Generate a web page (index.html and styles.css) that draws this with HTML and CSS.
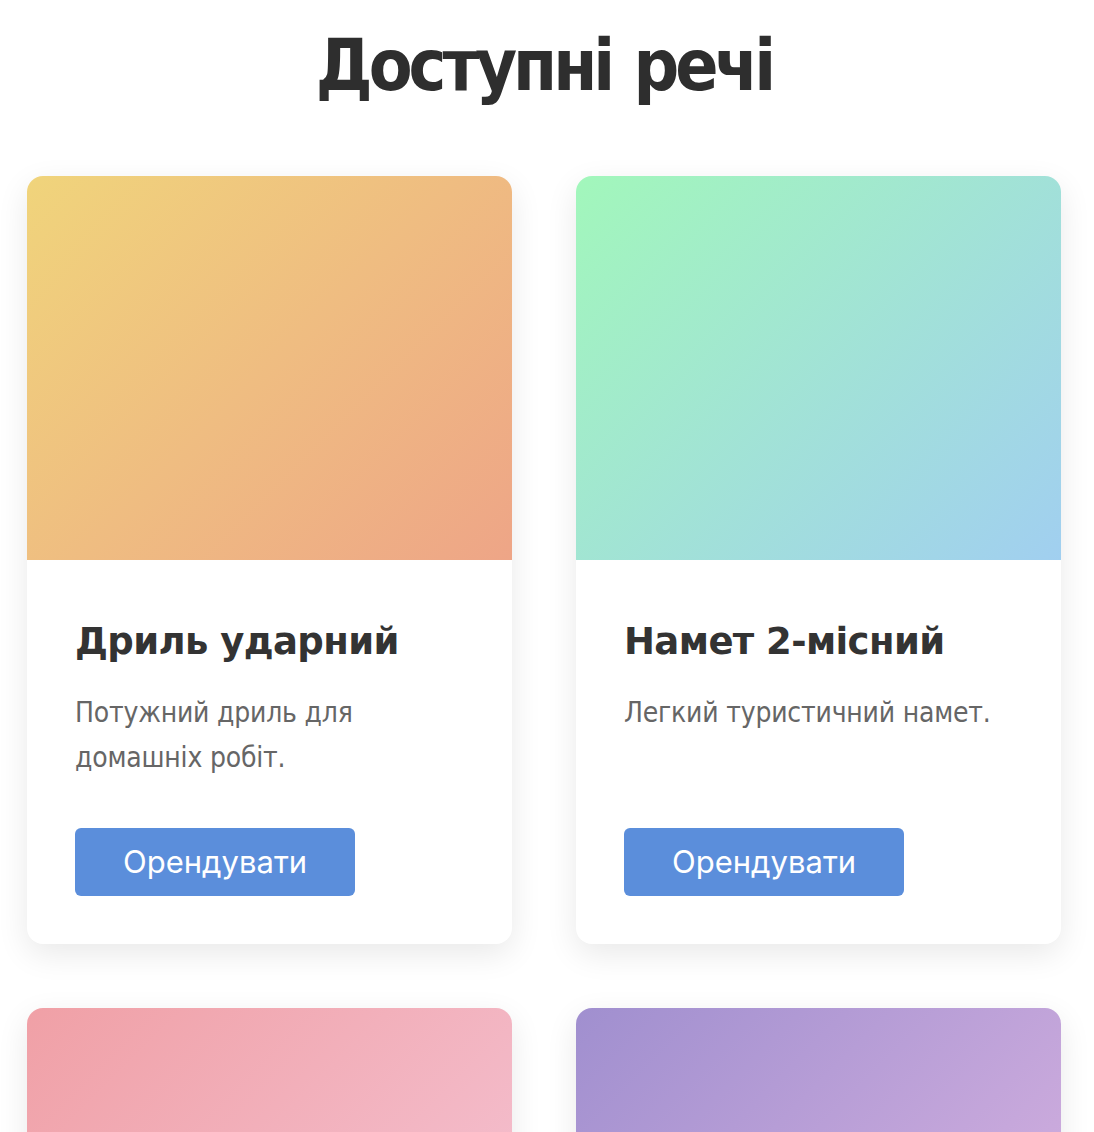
FILE: index.html
```html
<!DOCTYPE html>
<html lang="uk">
<head>
<meta charset="utf-8">
<title>Доступні речі</title>
<link rel="stylesheet" href="styles.css">
</head>
<body>
<main class="page">
  <h1 class="page-title">Доступні речі</h1>
  <div class="grid">
    <article class="card">
      <div class="card-image img-sunny"></div>
      <div class="card-body">
        <h3 class="card-title">Дриль ударний</h3>
        <p class="card-text">Потужний дриль для домашніх робіт.</p>
        <button class="btn">Орендувати</button>
      </div>
    </article>
    <article class="card">
      <div class="card-image img-mint"></div>
      <div class="card-body">
        <h3 class="card-title">Намет 2-місний</h3>
        <p class="card-text">Легкий туристичний намет.</p>
        <button class="btn">Орендувати</button>
      </div>
    </article>
    <article class="card">
      <div class="card-image img-pink"></div>
      <div class="card-body">
        <h3 class="card-title">Велосипед міський</h3>
        <p class="card-text">Зручний велосипед для прогулянок містом.</p>
        <button class="btn">Орендувати</button>
      </div>
    </article>
    <article class="card">
      <div class="card-image img-lilac"></div>
      <div class="card-body">
        <h3 class="card-title">Проектор</h3>
        <p class="card-text">Проектор для домашнього кінотеатру.</p>
        <button class="btn">Орендувати</button>
      </div>
    </article>
  </div>
</main>
</body>
</html>
```

FILE: styles.css
```css
* { box-sizing: border-box; }

html, body {
  margin: 0;
  padding: 0;
  background: #ffffff;
}

body {
  font-family: "DejaVu Sans", Verdana, sans-serif;
  color: #333333;
}

.page {
  padding: 0 33px 40px 27px;
}

.page-title {
  margin: 0;
  padding-top: 23px;
  padding-bottom: 68px;
  font-family: "DejaVu Sans Condensed", "DejaVu Sans", sans-serif;
  font-size: 71px;
  line-height: 1.2;
  font-weight: 700;
  text-align: center;
  color: #2e2e2e;
  letter-spacing: -4px;
  word-spacing: 4px;
}

.grid {
  display: grid;
  grid-template-columns: 1fr 1fr;
  column-gap: 64px;
  row-gap: 64px;
}

.card {
  background: #ffffff;
  border-radius: 16px;
  overflow: hidden;
  box-shadow: 0 10px 32px rgba(0, 0, 0, 0.09);
  display: flex;
  flex-direction: column;
}

.card-image {
  height: 384px;
  flex: none;
}

.img-sunny { background: linear-gradient(135deg, #f0d47b 0%, #eea587 100%); }
.img-mint { background: linear-gradient(135deg, #a2f7bb 0%, #a1cff0 100%); }
.img-pink { background: linear-gradient(135deg, #f0a0a6 0%, #f5c6d8 100%); }
.img-lilac { background: linear-gradient(135deg, #a08fcf 0%, #dcb5e2 100%); }

.card-body {
  flex: none;
  display: flex;
  flex-direction: column;
  align-items: flex-start;
  padding: 48px;
  min-height: 384px;
}

.card-title {
  margin: 12px 0 0;
  font-size: 37px;
  line-height: 1.2;
  font-weight: 700;
  color: #333333;
  letter-spacing: -0.6px;
}

.card-text {
  margin: 25px 0 0;
  font-family: "DejaVu Sans Condensed", "DejaVu Sans", sans-serif;
  font-size: 28px;
  line-height: 45px;
  color: #666666;
  letter-spacing: -0.2px;
}

.btn {
  margin-top: auto;
  border: none;
  border-radius: 6px;
  background: #5b8edb;
  color: #ffffff;
  font-family: Inter, "Noto Sans", sans-serif;
  font-size: 31px;
  line-height: 36px;
  padding: 16px 48px;
  cursor: pointer;
}
```
